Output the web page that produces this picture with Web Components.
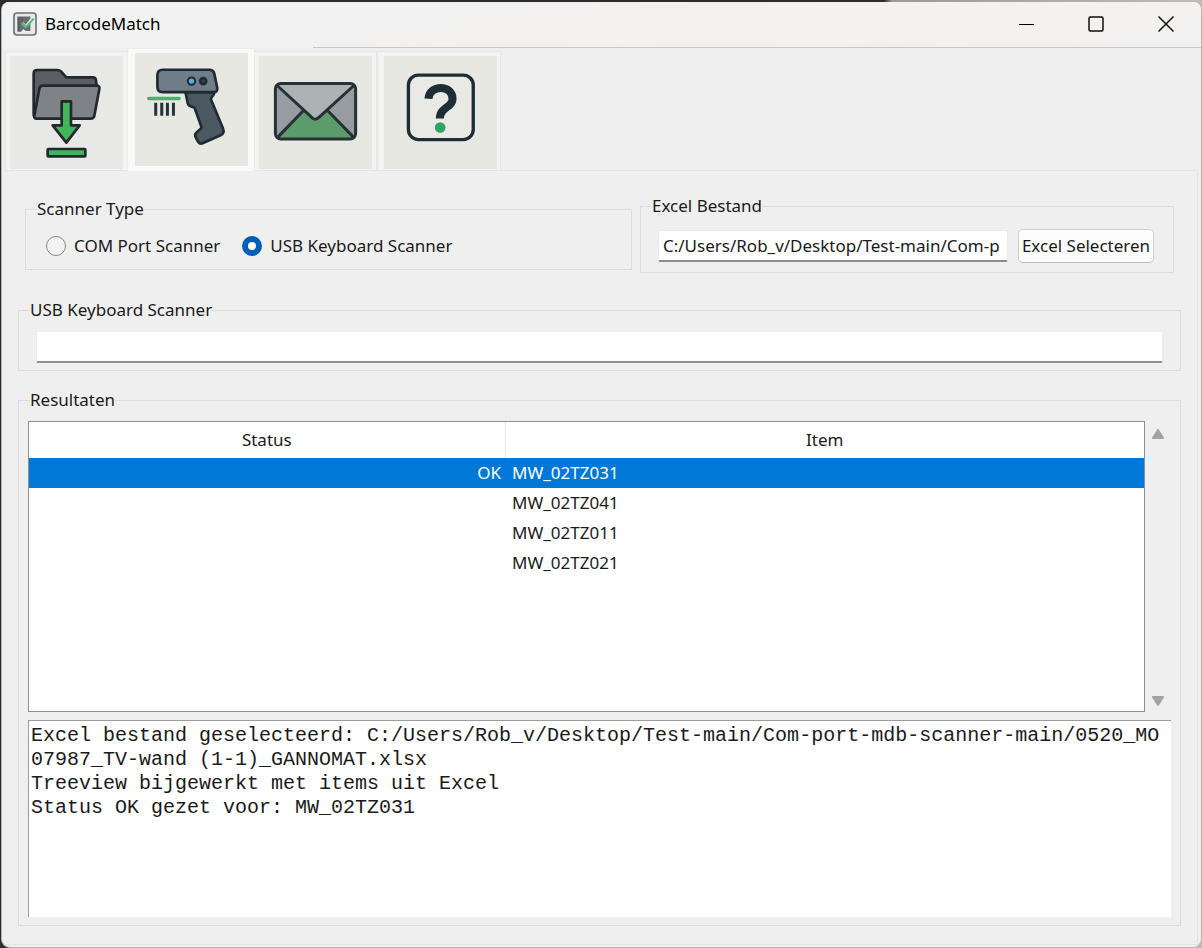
<!DOCTYPE html>
<html lang="nl">
<head>
<meta charset="utf-8">
<meta name="viewport" content="width=device-width, initial-scale=1">
<title>BarcodeMatch</title>
<style>
  html { height: 100%; background: linear-gradient(90deg, #2e2b2c 0 884px, #9b9a99 892px, #bdbcbb 100%); }
  body { margin: 0; min-height: 100%; display: flex; font: 17px/24px "Noto Sans", "Open Sans", sans-serif; color: #1a1a1a; }
</style>
</head>
<body>
<app-window>
  <title-bar slot="title">BarcodeMatch</title-bar>
  <tab-strip slot="tabs"></tab-strip>
  <div slot="top" style="display:contents">
    <group-box label="Scanner Type" style="--pad: 13px 20px 11px"><scanner-choice></scanner-choice></group-box>
    <group-box label="Excel Bestand" style="--pad: 11px 19px 9px 17px"><file-picker></file-picker></group-box>
  </div>
  <group-box label="USB Keyboard Scanner" style="--pad: 9px 17px 7px"><entry-field label="USB Keyboard Scanner"></entry-field></group-box>
  <group-box class="grow" label="Resultaten" style="--pad: 9px 9px 8px"><result-view></result-view></group-box>
</app-window>

<script>
const define = (name, html, setup) => {
  const template = document.createElement('template');
  template.innerHTML = html;
  customElements.define(name, class extends HTMLElement {
    connectedCallback() {
      if (this.shadowRoot) return;
      const root = this.attachShadow({ mode: 'open' });
      root.append(template.content.cloneNode(true));
      if (setup) setup(this, root);
    }
  });
};

define('app-window', `
<style>
  :host { display: flex; flex: 1; flex-direction: column; box-sizing: border-box; margin: 2px 0 0 1px; border: solid #b4b4b4; border-width: 0 1px 1px 1px; border-radius: 8px 8px 9px 9px; background: #efefef; overflow: hidden; min-width: 0; }
  main { flex: 1; display: flex; flex-direction: column; margin: 0 3px 2px 3px; padding: 23px 16px 18px 13px; border: 1px solid #e4e4e4; border-left: 0; }
  .top { display: grid; grid-template-columns: 607fr 534fr; gap: 8px; align-items: center; margin: 0 7px 25px 7px; }
  .rest { flex: 1; display: flex; flex-direction: column; gap: 17px; }
  ::slotted(.grow) { flex: 1; }
</style>
<slot name="title"></slot>
<slot name="tabs"></slot>
<main>
  <div class="top"><slot name="top"></slot></div>
  <div class="rest"><slot></slot></div>
</main>`);

define('title-bar', `
<style>
  :host { display: flex; align-items: center; height: 43px; padding: 0 0 3px 11px; color: #000;
    background: linear-gradient(90deg, #c8c4c4, #c8c4c4) 311px 100% / 100% 1px no-repeat, linear-gradient(170deg, #f2f2f2 30%, #f5f1ef 65%, #f2f2f2); }
  .logo { width: 24px; height: 24px; margin-right: 8px; }
  h1 { flex: 1; margin: 0; font: inherit; font-size: 17px; }
  button { width: 70px; height: 43px; padding: 0; border: 0; background: none; display: grid; place-items: center; }
</style>
<svg class="logo" viewBox="38 33 73 73" aria-hidden="true">
  <rect x="41" y="36" width="67" height="67" rx="9" fill="#e9ebea" stroke="#6c7376" stroke-width="5"/>
  <path d="M51 47h40v6l-14 18-8-7-5 6 13 12 14-14v23H77l-8-6-6 8H51z" fill="#6a6e73"/>
  <path d="M56 48v43M66 48v14" stroke="#50555a" stroke-width="4"/>
  <path d="M66 67l12 11 23-25" fill="none" stroke="#43bd78" stroke-width="6"/>
</svg>
<h1><slot></slot></h1>
<button aria-label="Minimaliseren"><svg width="16" height="16"><path d="M1 8.500h15" stroke="#000"/></svg></button>
<button aria-label="Maximaliseren"><svg width="16" height="16"><rect x="1" y="1" width="14" height="14" rx="1.500" fill="none" stroke="#111" stroke-width="1.500"/></svg></button>
<button aria-label="Sluiten"><svg width="16" height="16"><path d="M.5.5l15 15M15.500.5l-15 15" stroke="#111" stroke-width="1.500"/></svg></button>`);

define('tab-strip', `
<style>
  :host { display: flex; align-items: flex-end; padding-left: 3px; height: 122px; }
  button { box-sizing: border-box; width: 123px; height: 119px; padding: 4px 4px 1px; border: 1px solid #e6e6e6; border-bottom: 0; background: #f3f3f3; display: block; }
  button[aria-selected=true] { width: 128px; height: 123px; margin: 0 -1px -1px; padding: 4px 7px 5px; background: #f9f9f9; border-color: #ececec; position: relative; }
  button:last-of-type { width: 124px; padding-left: 6px; }
  svg { display: block; width: 113px; height: 113px; background: #e8e8e3; stroke-linejoin: round; }
  button:first-of-type svg { background: #e8e8e7; }
  nav { display: contents; }
</style>
<nav role="tablist">
<button role="tab" aria-label="Importeren"><svg viewBox="30 168 339 339">
  <g stroke="#22282b" stroke-width="8">
    <path d="M101 346V220q0-10 10-10h62q6 0 10 4l16 18h79q9 0 10 9l2 18-40 80z" fill="#5b5e62"/>
    <path d="M128 257h162q10 0 8 10l-15 80q-2 9-11 9H110q-9 0-7-9l15-81q2-9 10-9z" fill="#7f8287"/>
    <path d="M185 304h28v72h26l-40 52-41-52h27z" fill="#42b55b"/>
    <rect x="143" y="447" width="113" height="22" fill="#42b55b" rx="2"/>
  </g></svg></button>
<button role="tab" aria-selected="true" aria-label="Scanner"><svg viewBox="405 159 338 338">
  <g stroke="#1e2c35" stroke-width="8">
    <path d="M556 276h82q8 3-4 16-3 4-1 8l35 84q6 15-7 21l-54 24q-8 3-13-4l-7-13q-5-9 2-15l11-10q5-4 3-9l-19-53q-2-5-8-5-10-2-13-10z" fill="#4b5862"/>
    <path d="M488 209h140q11 0 14 11l9 43q2 13-11 13H488q-16 0-16-16v-35q0-16 16-16z" fill="#707c87"/>
    <circle cx="574" cy="243" r="11" fill="#58add4" stroke-width="6"/>
    <circle cx="609" cy="243" r="9" fill="#38444e"/>
  </g>
  <path d="M446 295h91" stroke="#3fb56e" stroke-width="10" stroke-linecap="round"/>
  <path d="M467 308v39M485 308v39M502 308v39M520 308v39" stroke="#25333c" stroke-width="9"/></svg></button>
<button role="tab" aria-label="E-mail"><svg viewBox="27 48 338 338">
  <rect x="76" y="130" width="240" height="166" rx="16" fill="#969c9f"/>
  <path d="M82 293l77-83 37 27 37-27 78 83z" fill="#5c9b6b"/>
  <path d="M82 134h228l-105 99q-9 7-18 0z" fill="#adb3b5"/>
  <g fill="none" stroke="#263135" stroke-width="9"><path d="M82 137l102 94q11 12 23 0L310 137M84 290l76-79M309 290l-77-79"/><rect x="76" y="130" width="240" height="166" rx="16"/></g></svg></button>
<button role="tab" aria-label="Help"><svg viewBox="400 48 338 338">
  <rect x="473" y="105" width="194" height="193" rx="30" fill="#e9e9e5" stroke="#1f2e36" stroke-width="10"/>
  <path d="M533 176c2-43 73-44 72 1 0 25-38 24-38 58" fill="none" stroke="#1f2e36" stroke-width="24"/>
  <circle cx="568" cy="262" r="16" fill="#2ea65f"/></svg></button>
</nav>`);

define('group-box', `
<style>
  :host { display: flex; flex-direction: column; min-width: 0; }
  fieldset { flex: 1; display: flex; flex-direction: column; min-width: 0; margin: 0; padding: var(--pad); border: 1px solid #dcdcdc; }
  legend { padding: 0; line-height: 24px; height: 24px; margin-left: calc(11px - var(--left, 0px)); }
</style>
<fieldset><legend></legend><slot></slot></fieldset>`, (host, root) => {
  root.querySelector('legend').textContent = host.getAttribute('label');
  const pad = getComputedStyle(root.querySelector('fieldset')).paddingLeft;
  host.style.setProperty('--left', pad);
});

define('scanner-choice', `
<style>
  :host { display: flex; gap: 22px; height: 24px; }
  label { display: flex; align-items: center; gap: 8px; white-space: nowrap; }
  input { appearance: none; box-sizing: border-box; width: 20px; height: 20px; margin: 0; border: 1px solid #858585; border-radius: 50%; background: #f3f3f3; }
  input:checked { border: 6px solid #005fb8; background: #fff; }
</style>
<label><input type="radio" name="type">COM Port Scanner</label>
<label><input type="radio" name="type" checked>USB Keyboard Scanner</label>`);

define('entry-field', `
<style>
  :host { display: block; flex: 1; min-width: 0; }
  input { display: block; box-sizing: border-box; width: 100%; height: 32px; padding: 0 3px 0 4px; font: inherit; color: inherit; background: #fff; border: 1px solid #ebebeb; border-bottom: 2px solid #8f8f8f; border-radius: 2px; outline: 0; }
</style>
<input type="text">`, (host, root) => {
  const input = root.querySelector('input');
  input.setAttribute('aria-label', host.getAttribute('label'));
  input.value = host.getAttribute('value') || '';
});

define('file-picker', `
<style>
  :host { display: flex; align-items: center; gap: 10px; }
  button { box-sizing: border-box; width: 136px; height: 34px; padding: 0; font: inherit; color: inherit; white-space: nowrap; background: #fdfdfd; border: 1px solid #d0d0d0; border-bottom-color: #bcbcbc; border-radius: 5px; }
</style>
<entry-field label="Excel Bestand" value="C:/Users/Rob_v/Desktop/Test-main/Com-p"></entry-field>
<button>Excel Selecteren</button>`);

define('result-view', `
<style>
  :host { flex: 1; display: flex; flex-direction: column; gap: 8px; }
  .list { flex: 291 1 0; display: flex; }
  .tree { flex: 1; border: 1px solid #8b9097; background: #fff; }
  table { width: 100%; table-layout: fixed; border-collapse: collapse; }
  th { height: 36px; padding: 0; font-weight: 400; }
  th:first-child { width: 42.7%; border-right: 1px solid #e5e5e5; box-sizing: border-box; }
  td { height: 30px; padding: 0 7px; }
  td:first-child { text-align: right; padding-right: 4px; }
  tr.selected { background: #0078d7; color: #fff; }
  .bar { width: 26px; display: flex; flex-direction: column; justify-content: space-between; align-items: center; padding: 8px 0 6px; }
  textarea { flex: 191 1 0; display: block; box-sizing: border-box; margin: 0; padding: 3px 2px 2px; border: solid #9c9c9c; border-width: 1px 0 0 1px; background: #fff; color: #1a1a1a; font: 20px/24px "Liberation Mono", monospace; word-break: break-all; resize: none; overflow: hidden; outline: 0; }
</style>
<div class="list">
  <div class="tree"><table>
    <thead><tr><th scope="col">Status</th><th scope="col">Item</th></tr></thead>
    <tbody>
      <tr class="selected"><td>OK</td><td>MW_02TZ031</td></tr>
      <tr><td></td><td>MW_02TZ041</td></tr>
      <tr><td></td><td>MW_02TZ011</td></tr>
      <tr><td></td><td>MW_02TZ021</td></tr>
    </tbody>
  </table></div>
  <div class="bar" aria-hidden="true">
    <svg width="12" height="10"><path d="M6 1l5 8H1z" fill="#a3a3a3" stroke="#a3a3a3" stroke-width="2" stroke-linejoin="round"/></svg>
    <svg width="12" height="10"><path d="M6 9l5-8H1z" fill="#a3a3a3" stroke="#a3a3a3" stroke-width="2" stroke-linejoin="round"/></svg>
  </div>
</div>
<textarea aria-label="Logboek" spellcheck="false">Excel bestand geselecteerd: C:/Users/Rob_v/Desktop/Test-main/Com-port-mdb-scanner-main/0520_MO07987_TV-wand (1-1)_GANNOMAT.xlsx
Treeview bijgewerkt met items uit Excel
Status OK gezet voor: MW_02TZ031</textarea>`);
</script>
</body>
</html>
